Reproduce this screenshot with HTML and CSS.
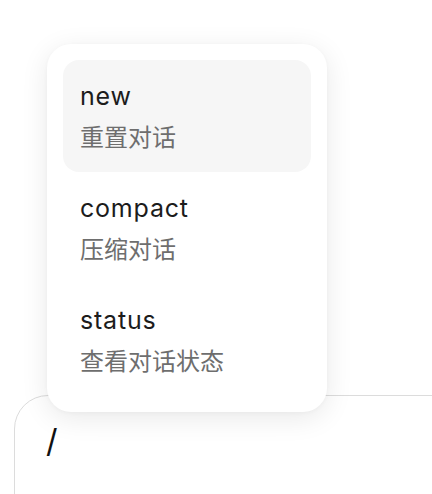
FILE: index.html
```html
<!DOCTYPE html>
<html lang="zh-CN">
<head>
<meta charset="utf-8">
<link rel="stylesheet" href="styles.css">
</head>
<body>
<div class="stage">
  <div class="composer">
    <div class="composer-text">/</div>
  </div>
  <div class="menu">
    <div class="item active">
      <div class="title">new</div>
      <div class="desc">重置对话</div>
    </div>
    <div class="item">
      <div class="title">compact</div>
      <div class="desc">压缩对话</div>
    </div>
    <div class="item">
      <div class="title">status</div>
      <div class="desc">查看对话状态</div>
    </div>
  </div>
</div>
</body>
</html>
```
FILE: styles.css
```css
html, body {
  margin: 0;
  padding: 0;
  background: #ffffff;
}
body {
  font-family: Inter, "Noto Sans CJK SC", sans-serif;
  color: #1a1a1a;
}
.stage {
  position: relative;
  width: 432px;
  height: 494px;
  overflow: hidden;
}
.composer {
  margin: 395px 0 0 14px;
  width: 520px;
  height: 200px;
  box-sizing: border-box;
  border: 1px solid #dcdcdc;
  border-radius: 34px;
  padding: 25px 31px;
}
.composer-text {
  font-size: 32px;
  line-height: 40px;
  font-weight: 400;
  color: #111;
}
.menu {
  position: absolute;
  left: 47px;
  top: 44px;
  width: 280px;
  box-sizing: border-box;
  padding: 16px;
  background: #fff;
  border-radius: 24px;
  box-shadow: 0 6px 28px rgba(0, 0, 0, 0.09), 0 1px 4px rgba(0, 0, 0, 0.03);
  display: flex;
  flex-direction: column;
}
.item {
  height: 112px;
  box-sizing: border-box;
  padding: 21px 17px 0;
  border-radius: 16px;
  display: flex;
  flex-direction: column;
  gap: 10px;
}
.item.active {
  background: #f6f6f6;
}
.title {
  font-size: 25px;
  line-height: 30px;
  letter-spacing: 0.8px;
  color: #1c1c1c;
}
.desc {
  font-family: "Noto Sans CJK SC", sans-serif;
  font-size: 24px;
  line-height: 30px;
  color: #6e6e6e;
}
```
